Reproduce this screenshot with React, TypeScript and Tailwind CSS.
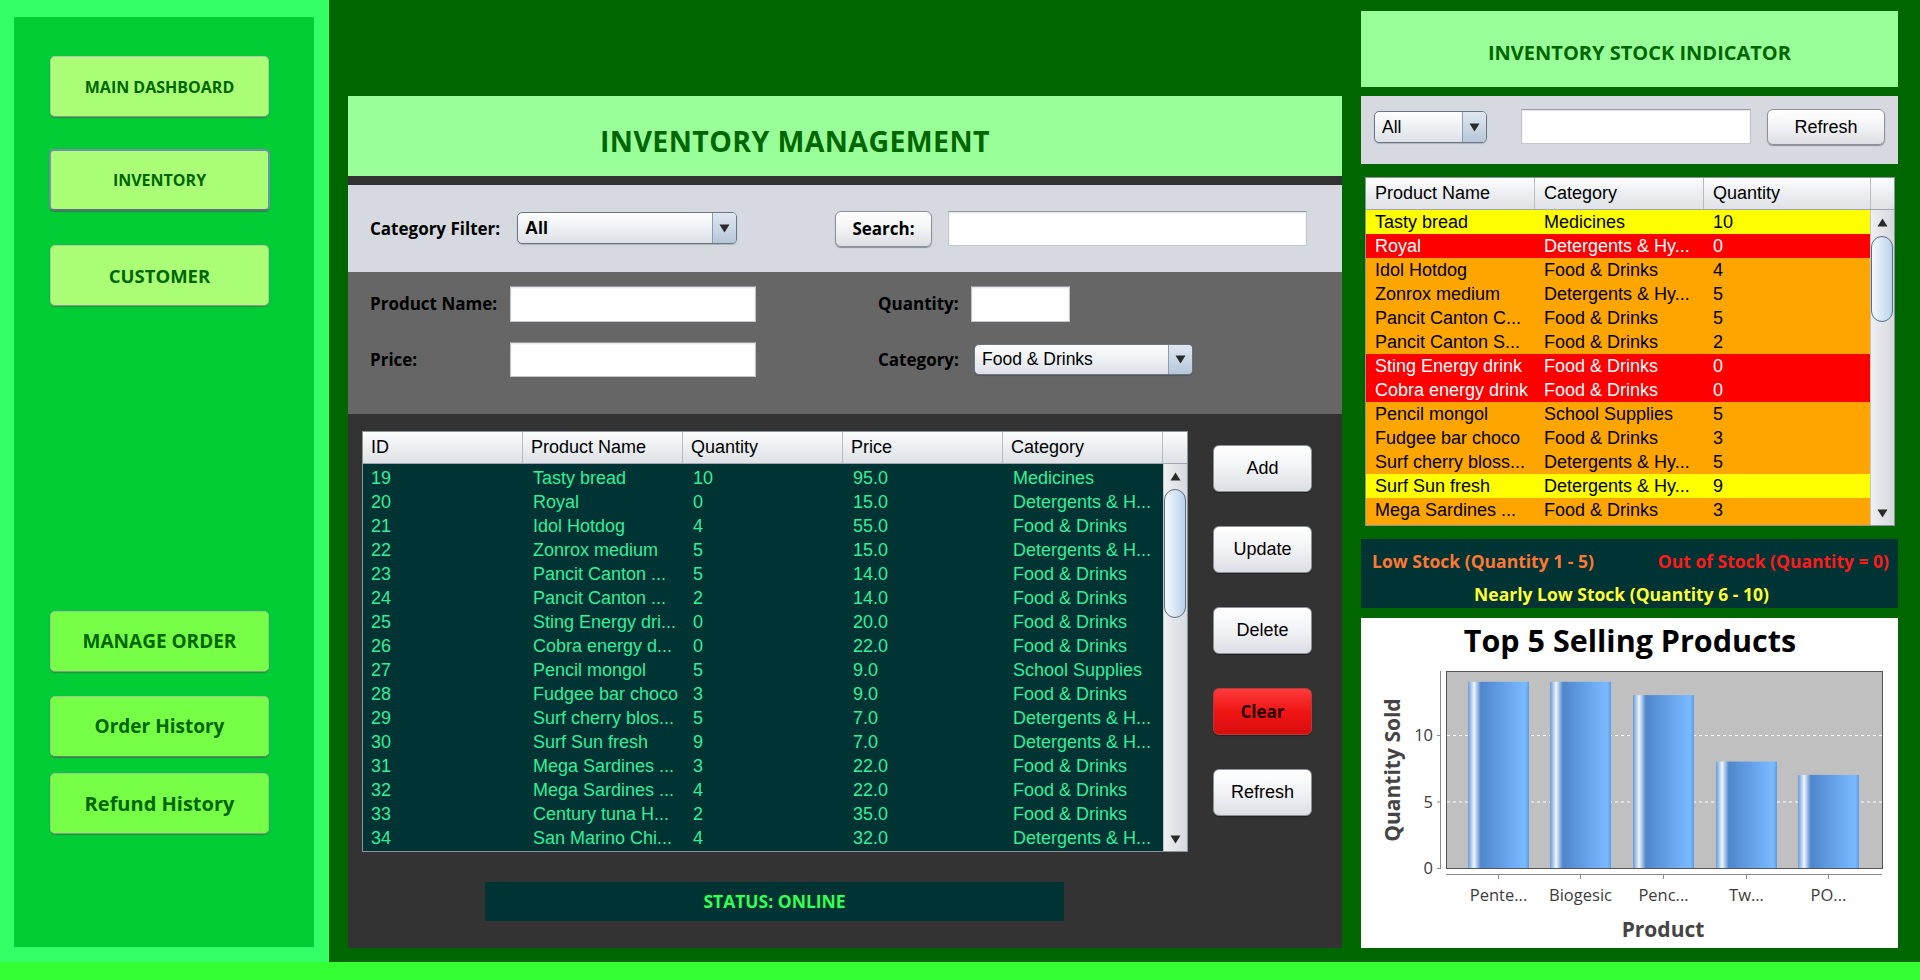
import React from "react";

const OS = "font-['Open_Sans',sans-serif]";
const AR = "font-['Liberation_Sans',Arial,sans-serif]";

type LRow = [string, string, string, string, string];
const leftRows: LRow[] = [
  ["19", "Tasty bread", "10", "95.0", "Medicines"],
  ["20", "Royal", "0", "15.0", "Detergents & H..."],
  ["21", "Idol Hotdog", "4", "55.0", "Food & Drinks"],
  ["22", "Zonrox medium", "5", "15.0", "Detergents & H..."],
  ["23", "Pancit Canton ...", "5", "14.0", "Food & Drinks"],
  ["24", "Pancit Canton ...", "2", "14.0", "Food & Drinks"],
  ["25", "Sting Energy dri...", "0", "20.0", "Food & Drinks"],
  ["26", "Cobra energy d...", "0", "22.0", "Food & Drinks"],
  ["27", "Pencil mongol", "5", "9.0", "School Supplies"],
  ["28", "Fudgee bar choco", "3", "9.0", "Food & Drinks"],
  ["29", "Surf cherry blos...", "5", "7.0", "Detergents & H..."],
  ["30", "Surf Sun fresh", "9", "7.0", "Detergents & H..."],
  ["31", "Mega Sardines ...", "3", "22.0", "Food & Drinks"],
  ["32", "Mega Sardines ...", "4", "22.0", "Food & Drinks"],
  ["33", "Century tuna H...", "2", "35.0", "Food & Drinks"],
  ["34", "San Marino Chi...", "4", "32.0", "Detergents & H..."],
];

type Tone = "y" | "r" | "o";
type RRow = { n: string; c: string; q: string; t: Tone };
const rightRows: RRow[] = [
  { n: "Tasty bread", c: "Medicines", q: "10", t: "y" },
  { n: "Royal", c: "Detergents & Hy...", q: "0", t: "r" },
  { n: "Idol Hotdog", c: "Food & Drinks", q: "4", t: "o" },
  { n: "Zonrox medium", c: "Detergents & Hy...", q: "5", t: "o" },
  { n: "Pancit Canton C...", c: "Food & Drinks", q: "5", t: "o" },
  { n: "Pancit Canton S...", c: "Food & Drinks", q: "2", t: "o" },
  { n: "Sting Energy drink", c: "Food & Drinks", q: "0", t: "r" },
  { n: "Cobra energy drink", c: "Food & Drinks", q: "0", t: "r" },
  { n: "Pencil mongol", c: "School Supplies", q: "5", t: "o" },
  { n: "Fudgee bar choco", c: "Food & Drinks", q: "3", t: "o" },
  { n: "Surf cherry bloss...", c: "Detergents & Hy...", q: "5", t: "o" },
  { n: "Surf Sun fresh", c: "Detergents & Hy...", q: "9", t: "y" },
  { n: "Mega Sardines ...", c: "Food & Drinks", q: "3", t: "o" },
  { n: "", c: "", q: "", t: "o" },
];

const toneCls: Record<Tone, string> = {
  y: "bg-[#ffff00] text-black",
  r: "bg-[#ff0000] text-white",
  o: "bg-[#ffa500] text-black",
};

function Tri({ down }: { down?: boolean }) {
  return (
    <svg width="11" height="9" viewBox="0 0 11 9" className="block">
      <path d={down ? "M0.5 0.5H10.5L5.5 8.5Z" : "M0.5 8.5H10.5L5.5 0.5Z"} fill="#2a2a2a" />
    </svg>
  );
}

function ScrollBar({ thumb }: { thumb: string }) {
  return (
    <div className="w-[24px] h-full shrink-0 flex flex-col bg-[linear-gradient(90deg,#eef0f2,#d5d8dd)] border-l border-[#c2c6cb]">
      <div className="h-[24px] shrink-0 flex items-center justify-center">
        <Tri />
      </div>
      <div className="flex-1 min-h-0">
        <div
          className={`mr-[1px] rounded-[11px] border border-[#5b6e87] bg-[linear-gradient(90deg,#f5f9fd,#d4e4f3_55%,#bcd2ea)] ${thumb}`}
        />
      </div>
      <div className="h-[24px] shrink-0 flex items-center justify-center">
        <Tri down />
      </div>
    </div>
  );
}

function Field({ cls }: { cls: string }) {
  return (
    <div
      className={`bg-white border border-[#c3c7cc] border-t-[#989ca2] shadow-[inset_0_1px_2px_rgba(0,0,0,0.12)] ${cls}`}
    />
  );
}

function Combo({ value, cls, text }: { value: string; cls: string; text: string }) {
  return (
    <div
      className={`flex rounded-[5px] border border-[#6b7684] overflow-hidden bg-[linear-gradient(#fefefe,#eff1f4_45%,#dde1e7)] shadow-[0_1px_1px_rgba(0,0,0,0.18)] ${cls}`}
    >
      <div className={`flex-1 flex items-center pl-[7px] text-black ${AR} ${text}`}>{value}</div>
      <div className="w-[24px] shrink-0 flex items-center justify-center border-l border-[#8a9bb0] bg-[linear-gradient(#dfe8f1,#b6c7da)]">
        <Tri down />
      </div>
    </div>
  );
}

function GrayBtn({ children, cls }: { children: React.ReactNode; cls: string }) {
  return (
    <div
      className={`flex items-center justify-center rounded-[6px] border border-[#8b9198] bg-[linear-gradient(#ffffff,#f3f4f6_45%,#dcdfe3)] shadow-[0_1px_1px_rgba(0,0,0,0.35)] text-black ${cls}`}
    >
      {children}
    </div>
  );
}

function SideBtn({ label, cls }: { label: string; cls: string }) {
  return (
    <div
      className={`flex items-center justify-center rounded-[5px] text-[#006600] font-bold ${OS} shadow-[0_1px_1px_rgba(60,90,60,0.5)] ${cls}`}
    >
      {label}
    </div>
  );
}

function Chart() {
  const y0 = 250;
  const k = 13.3;
  const bars = [
    { x: 107, v: 14, label: "Pente..." },
    { x: 189, v: 14, label: "Biogesic" },
    { x: 272, v: 13, label: "Penc..." },
    { x: 355, v: 8, label: "Tw..." },
    { x: 437, v: 7, label: "PO..." },
  ];
  const ticks = [0, 5, 10];
  return (
    <svg width="537" height="330" viewBox="0 0 537 330" className="block">
      <defs>
        <linearGradient id="barg" x1="0" x2="1" y1="0" y2="0">
          <stop offset="0" stopColor="#6c9ad6" />
          <stop offset="0.05" stopColor="#a9c7ec" />
          <stop offset="0.1" stopColor="#f2f7fc" />
          <stop offset="0.15" stopColor="#a7c4e8" />
          <stop offset="0.21" stopColor="#4f86cc" />
          <stop offset="0.8" stopColor="#72b1f8" />
          <stop offset="0.94" stopColor="#7abaff" />
          <stop offset="1" stopColor="#5e9ae4" />
        </linearGradient>
      </defs>
      <text
        x="269"
        y="34"
        textAnchor="middle"
        fontFamily="Open Sans, sans-serif"
        fontWeight="700"
        fontSize="30.5"
        fill="#000"
      >
        Top 5 Selling Products
      </text>
      <rect x="85.5" y="53.5" width="436" height="197" fill="#c0c0c0" />
      {[5, 10].map((t) => (
        <line
          key={t}
          x1="86"
          x2="521"
          y1={y0 - t * k + 0.5}
          y2={y0 - t * k + 0.5}
          stroke="#ffffff"
          strokeWidth="1"
          strokeDasharray="3 3"
        />
      ))}
      {bars.map((b) => (
        <rect key={b.x} x={b.x} y={y0 - b.v * k} width="61" height={b.v * k} fill="url(#barg)" />
      ))}
      <rect x="85.5" y="53.5" width="436" height="197" fill="none" stroke="#555" />
      <line x1="79.5" x2="79.5" y1="53" y2="251" stroke="#8a8a8a" />
      {ticks.map((t) => (
        <g key={t}>
          <line x1="76" x2="79.5" y1={y0 - t * k + 0.5} y2={y0 - t * k + 0.5} stroke="#8a8a8a" />
          <text
            x="72"
            y={y0 - t * k + 6}
            textAnchor="end"
            fontFamily="Open Sans, sans-serif"
            fontSize="16.5"
            fill="#3c3c3c"
          >
            {t}
          </text>
        </g>
      ))}
      <line x1="85" x2="521" y1="256.5" y2="256.5" stroke="#8a8a8a" />
      {bars.map((b) => (
        <g key={"l" + b.x}>
          <line x1={b.x + 30.5} x2={b.x + 30.5} y1="256" y2="261" stroke="#8a8a8a" />
          <text
            x={b.x + 30.5}
            y="283"
            textAnchor="middle"
            fontFamily="Open Sans, sans-serif"
            fontSize="16.5"
            fill="#3c3c3c"
          >
            {b.label}
          </text>
        </g>
      ))}
      <text
        x="302"
        y="319"
        textAnchor="middle"
        fontFamily="Open Sans, sans-serif"
        fontWeight="700"
        fontSize="21"
        fill="#444"
      >
        Product
      </text>
      <text
        x="0"
        y="0"
        transform="translate(39 152) rotate(-90)"
        textAnchor="middle"
        fontFamily="Open Sans, sans-serif"
        fontWeight="700"
        fontSize="21"
        fill="#444"
      >
        Quantity Sold
      </text>
    </svg>
  );
}

export default function App() {
  const colW = ["w-[160px]", "w-[160px]", "w-[160px]", "w-[160px]", "w-[160px]"];
  const heads = ["ID", "Product Name", "Quantity", "Price", "Category"];
  return (
    <div className="w-[1920px] h-[980px] flex flex-col overflow-hidden bg-[#006600]">
      <div className="flex h-[962px] shrink-0">
        {/* Sidebar */}
        <div className="w-[329px] h-full shrink-0 bg-[#33ff66] pt-[17px] pl-[14px] pr-[15px] pb-[15px]">
          <div className="w-full h-full bg-[#00cc33] flex flex-col pl-[36px] pt-[39px]">
            <SideBtn
              label="MAIN DASHBOARD"
              cls="w-[219px] h-[61px] bg-[#aaff77] border border-[#b3c7a8] border-b-[#8d998d] text-[16px]"
            />
            <SideBtn
              label="INVENTORY"
              cls="mt-[32px] -ml-[1px] w-[221px] h-[62px] bg-[#aaff77] border-2 border-[#7591ad] border-b-[#5d6f83] text-[16px]"
            />
            <SideBtn
              label="CUSTOMER"
              cls="mt-[34px] w-[219px] h-[61px] bg-[#aaff77] border border-[#b3c7a8] border-b-[#8d998d] text-[18.5px]"
            />
            <SideBtn
              label="MANAGE ORDER"
              cls="mt-[305px] w-[219px] h-[61px] bg-[#77ff47] border border-[#9dc295] border-b-[#8d998d] text-[19px]"
            />
            <SideBtn
              label="Order History"
              cls="mt-[24px] w-[219px] h-[61px] bg-[#77ff47] border border-[#9dc295] border-b-[#6f7d6f] text-[19px]"
            />
            <SideBtn
              label="Refund History"
              cls="mt-[16px] w-[219px] h-[61px] bg-[#77ff47] border border-[#9dc295] border-b-[#8d998d] text-[20px]"
            />
          </div>
        </div>

        {/* Center panel */}
        <div className="ml-[19px] mt-[96px] w-[994px] h-[852px] shrink-0 bg-[#333333] flex flex-col">
          <div className="h-[80px] shrink-0 bg-[#99ff99] flex items-center pl-[252px] pt-[10px]">
            <span className={`${OS} font-bold text-[28.5px] text-[#006600] tracking-[0.4px]`}>
              INVENTORY MANAGEMENT
            </span>
          </div>
          <div className="h-[9px] shrink-0" />
          <div className="h-[87px] shrink-0 bg-[#d6d9df] flex items-start pt-[26px] pl-[22px]">
            <div className={`${OS} font-bold text-[17px] text-black h-[36px] flex items-center w-[147px]`}>
              Category Filter:
            </div>
            <Combo value="All" cls="mt-[1px] w-[220px] h-[32px]" text="font-bold text-[18px]" />
            <GrayBtn cls={`ml-[98px] w-[97px] h-[36px] ${OS} font-bold text-[17px]`}>Search:</GrayBtn>
            <Field cls="ml-[16px] w-[359px] h-[35px]" />
          </div>
          <div className="h-[142px] shrink-0 bg-[#666666] pt-[14px] pl-[22px] flex flex-col">
            <div className="flex items-center h-[36px]">
              <div className={`${OS} font-bold text-[17px] text-black w-[140px]`}>Product Name:</div>
              <Field cls="w-[246px] h-[36px]" />
              <div className={`${OS} font-bold text-[17px] text-black ml-[122px] w-[93px]`}>Quantity:</div>
              <Field cls="w-[99px] h-[36px]" />
            </div>
            <div className="flex items-center h-[35px] mt-[20px]">
              <div className={`${OS} font-bold text-[17px] text-black w-[140px]`}>Price:</div>
              <Field cls="w-[246px] h-[35px]" />
              <div className={`${OS} font-bold text-[17px] text-black ml-[122px] w-[96px]`}>Category:</div>
              <Combo value="Food & Drinks" cls="w-[219px] h-[31px]" text="text-[17.5px]" />
            </div>
          </div>
          <div className="flex-1 flex flex-col pt-[17px]">
            <div className="flex">
              <div className="ml-[14px] w-[826px] h-[421px] border border-[#8d939a] flex flex-col bg-[#003333] shrink-0">
                <div
                  className={`h-[32px] shrink-0 flex bg-[linear-gradient(#fdfdfd,#eceef1_50%,#dfe2e6)] border-b border-[#a3a8ae] text-[18px] text-black ${AR}`}
                >
                  {heads.map((h, i) => (
                    <div
                      key={h}
                      className={`${colW[i]} h-full shrink-0 flex items-center pl-[8px] border-r border-[#b8bcc2]`}
                    >
                      {h}
                    </div>
                  ))}
                  <div className="flex-1" />
                </div>
                <div className="flex flex-1 min-h-0">
                  <div className={`flex-1 overflow-hidden pt-[2px] text-[18px] text-[#33ee99] ${AR}`}>
                    {leftRows.map((r) => (
                      <div key={r[0]} className="h-[24px] flex items-center">
                        {r.map((c, i) => (
                          <div
                            key={i}
                            className={`${colW[i]} shrink-0 whitespace-nowrap overflow-hidden ${i === 0 ? "pl-[8px]" : "pl-[10px]"}`}
                          >
                            {c}
                          </div>
                        ))}
                      </div>
                    ))}
                  </div>
                  <ScrollBar thumb="mt-[1px] h-[129px]" />
                </div>
              </div>
              <div className={`ml-[25px] mt-[14px] flex flex-col gap-[34px] ${AR} text-[18px]`}>
                <GrayBtn cls="w-[99px] h-[47px]">Add</GrayBtn>
                <GrayBtn cls="w-[99px] h-[47px]">Update</GrayBtn>
                <GrayBtn cls="w-[99px] h-[47px]">Delete</GrayBtn>
                <div
                  className={`w-[99px] h-[47px] flex items-center justify-center rounded-[6px] border border-[#b23b3b] bg-[linear-gradient(#ff3b3b,#f01515_50%,#d80d0d)] shadow-[0_1px_1px_rgba(0,0,0,0.35)] ${OS} font-bold text-[17px] text-[#220000]`}
                >
                  Clear
                </div>
                <GrayBtn cls="w-[99px] h-[47px]">Refresh</GrayBtn>
              </div>
            </div>
            <div className="ml-[137px] mt-[30px] w-[579px] h-[39px] bg-[#003333] flex items-center justify-center">
              <span className={`${OS} font-bold text-[17.5px] text-[#33ff55]`}>STATUS: ONLINE</span>
            </div>
          </div>
        </div>

        {/* Right panel */}
        <div className="ml-[19px] mt-[11px] w-[537px] shrink-0 flex flex-col">
          <div className="h-[76px] shrink-0 bg-[#99ff99] flex items-center justify-center pl-[20px] pt-[8px]">
            <span className={`${OS} font-bold text-[20px] text-[#006600]`}>INVENTORY STOCK INDICATOR</span>
          </div>
          <div className="h-[9px] shrink-0" />
          <div className="h-[68px] shrink-0 bg-[#d6d9df] flex items-start pt-[13px] pl-[13px]">
            <Combo value="All" cls="mt-[2px] w-[113px] h-[32px]" text="text-[17.5px]" />
            <Field cls="ml-[34px] w-[230px] h-[35px]" />
            <GrayBtn cls={`ml-[16px] w-[118px] h-[36px] ${AR} text-[18px]`}>Refresh</GrayBtn>
          </div>
          <div className="h-[13px] shrink-0" />
          <div className="ml-[4px] w-[530px] h-[349px] shrink-0 border border-[#8d939a] flex flex-col bg-[#ffa500]">
            <div
              className={`h-[32px] shrink-0 flex bg-[linear-gradient(#fdfdfd,#eceef1_50%,#dfe2e6)] border-b border-[#a3a8ae] text-[18px] text-black ${AR}`}
            >
              <div className="w-[169px] h-full shrink-0 flex items-center pl-[9px] border-r border-[#b8bcc2]">
                Product Name
              </div>
              <div className="w-[169px] h-full shrink-0 flex items-center pl-[9px] border-r border-[#b8bcc2]">
                Category
              </div>
              <div className="w-[167px] h-full shrink-0 flex items-center pl-[9px] border-r border-[#b8bcc2]">
                Quantity
              </div>
              <div className="flex-1" />
            </div>
            <div className="flex flex-1 min-h-0">
              <div className={`flex-1 overflow-hidden text-[18px] ${AR}`}>
                {rightRows.map((r, idx) => (
                  <div key={idx} className={`h-[24px] flex items-center pt-[1px] ${toneCls[r.t]}`}>
                    <div className="w-[169px] shrink-0 pl-[9px] whitespace-nowrap overflow-hidden">{r.n}</div>
                    <div className="w-[169px] shrink-0 pl-[9px] whitespace-nowrap overflow-hidden">{r.c}</div>
                    <div className="w-[167px] shrink-0 pl-[9px] whitespace-nowrap overflow-hidden">{r.q}</div>
                  </div>
                ))}
              </div>
              <ScrollBar thumb="mt-[2px] h-[86px]" />
            </div>
          </div>
          <div className="h-[13px] shrink-0" />
          <div className={`h-[69px] shrink-0 bg-[#003333] flex flex-col pt-[10px] ${OS} font-bold text-[17.5px]`}>
            <div className="h-[24px] flex items-center justify-between pl-[11px] pr-[9px]">
              <span className="text-[#ff7733]">Low Stock (Quantity 1 - 5)</span>
              <span className="text-[#ff1a1a]">Out of Stock (Quantity = 0)</span>
            </div>
            <div className="h-[24px] mt-[9px] flex items-center justify-center pr-[16px]">
              <span className="text-[#ffff33]">Nearly Low Stock (Quantity 6 - 10)</span>
            </div>
          </div>
          <div className="h-[10px] shrink-0" />
          <div className="h-[330px] shrink-0 bg-white">
            <Chart />
          </div>
        </div>
      </div>
      <div className="flex-1 bg-[#33ff33]" />
    </div>
  );
}
